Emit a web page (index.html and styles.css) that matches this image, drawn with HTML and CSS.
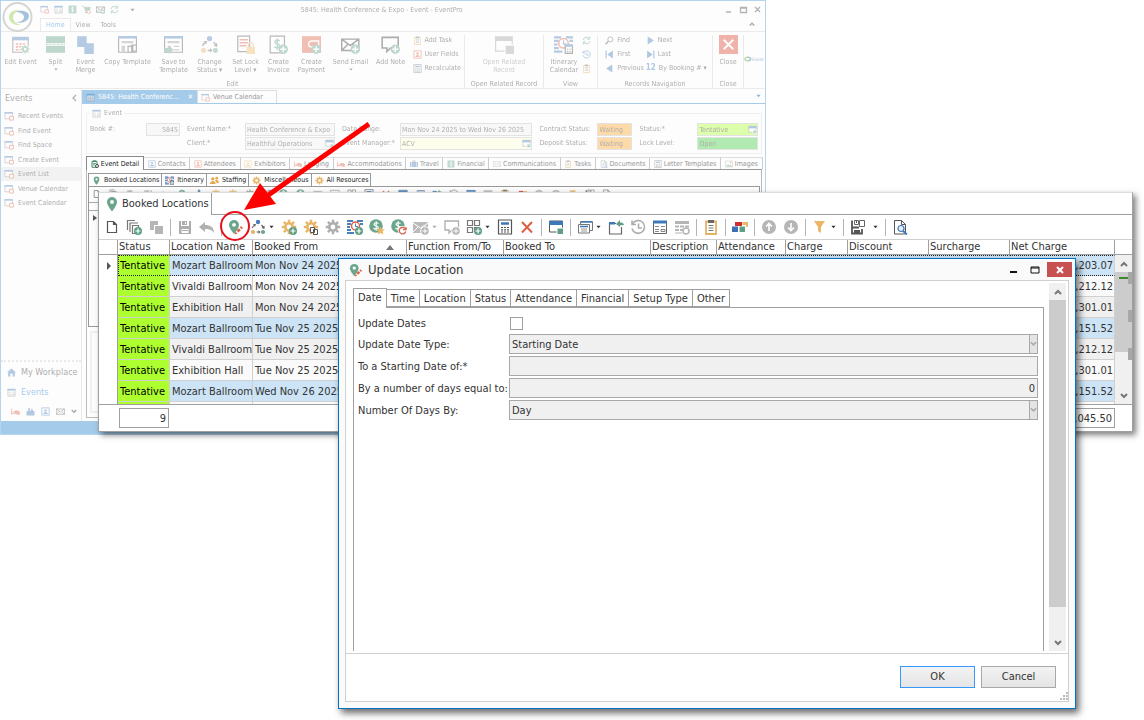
FILE: index.html
```html
<!DOCTYPE html>
<html lang="en">
<head>
    <meta charset="UTF-8">
    <meta name="viewport" content="width=device-width, initial-scale=1.0">
    <title>Update Location</title>
    <link rel="stylesheet" href="styles.css">
</head>
<body>
    <!-- Icons -->
    <svg class="icon-defs" aria-hidden="true">
        <symbol id="plus" viewBox="0 0 16 16"><circle cx="12" cy="12" r="4" fill="#5f9e84"/><path d="M12 9.500v5M9.500 12h5" stroke="#fff" stroke-width="1.200"/></symbol>
        <symbol id="pin" viewBox="0 0 16 16"><path d="M8 1a5 5 0 0 0-5 5c0 3.500 5 9.500 5 9.500s5-6 5-9.500a5 5 0 0 0-5-5z" fill="#6aa58c"/><circle cx="8" cy="6" r="1.900" fill="#fff"/></symbol>
        <symbol id="pinedit" viewBox="0 0 16 16"><path d="M6 1a5 5 0 0 0-5 5c0 3 5 9 5 9s5-6 5-9a5 5 0 0 0-5-5z" fill="#6aa58c"/><circle cx="6" cy="5.800" r="1.900" fill="#fff"/><path d="M7.500 12.500l2 2-2.700 1zM8.500 11.500l2.300-2.300 2 2-2.300 2.300zM11.800 8.200l1.200-1.200 2 2-1.200 1.200z" fill="#dd5f45"/></symbol>
        <symbol id="page" viewBox="0 0 16 16"><path d="M3.500 2.500h6l3 3v8h-9zM9.500 2.500v3h3" fill="#fff" stroke="#555" stroke-width="1.200"/></symbol>
        <symbol id="copyplus" viewBox="0 0 16 16"><path d="M1.500 11V1.500H9M4 13V4h8" fill="none" stroke="#777" stroke-width="1.200"/><path d="M6.500 6.500h6v8h-6z" fill="#fff" stroke="#777" stroke-width="1.200"/><use href="#plus"/></symbol>
        <symbol id="squares" viewBox="0 0 16 16"><path d="M2 2h8v4H6v5H2zM7 7h8v8H7z" fill="#b5b5b5"/></symbol>
        <symbol id="save" viewBox="0 0 16 16"><path d="M2 2h2v5h8V2h2v13H2zM5 2h5v4H5z" fill="#adadad"/><path d="M4.500 10h7v4h-7z" fill="#fff"/><path d="M5 11.500h6" stroke="#adadad"/><path d="M8 3h1v2H8z" fill="#fff"/></symbol>
        <symbol id="undo" viewBox="0 0 16 16"><path d="M0 8l6-5v3c5 0 9 2 9 8-2-3-4-4-9-4v3z" fill="#b0b0b0"/></symbol>
        <symbol id="status" viewBox="0 0 16 16"><circle cx="8" cy="3" r="2.200" fill="#4a7fbd"/><circle cx="3" cy="13" r="2.100" fill="#e6b062"/><circle cx="13" cy="13" r="2.100" fill="#6aa58c"/><path d="M2 9l2-2.500M11.500 6L14 9M6.500 13h3" stroke="#666" stroke-width="1.200" fill="none"/><path d="M3 5l3 0-1 3zM14.500 6.500v3.500l-3-1zM8.500 11l2 2-2 2z" fill="#666"/></symbol>
        <symbol id="cog" viewBox="0 0 16 16"><g fill="none" stroke="currentColor"><circle cx="8" cy="8" r="3.700" stroke-width="2.600"/><path d="M8 .8v3M8 12.200v3M.8 8h3M12.200 8h3M2.900 2.900L5 5M11 11l2.100 2.100M13.100 2.900L11 5M5 11l-2.100 2.100" stroke-width="2.400"/></g></symbol>
        <symbol id="cogplus" viewBox="0 0 16 16"><use href="#cog"/><use href="#plus"/></symbol>
        <symbol id="cogcopy" viewBox="0 0 16 16"><use href="#cog"/><path d="M7.500 8.500h4v5h-4zM10.500 10.500h4v5h-4z" fill="#fff" stroke="#555"/></symbol>
        <symbol id="itin" viewBox="0 0 16 16"><path d="M0 2h6M10 2h6M0 5h4M13 5h3M0 8h3M0 11h4M0 14h7" stroke="#4a7fbd" stroke-width="1.800"/><circle cx="8.500" cy="7" r="4" fill="#fff" stroke="#dd5f45" stroke-width="1.500"/><path d="M8.500 4.500V7.500h2.500" stroke="#4a7fbd" fill="none"/><use href="#plus"/></symbol>
        <symbol id="itincal" viewBox="0 0 16 16"><path d="M0 2h6M10 2h6M0 5h4M13 5h3M0 8h3M0 11h4M0 14h7" stroke="#4a7fbd" stroke-width="1.800"/><circle cx="8" cy="7" r="4" fill="#fff" stroke="#dd5f45" stroke-width="1.300"/><path d="M8 4.500V7.500h2.500" stroke="#4a7fbd" fill="none"/><path d="M9.500 8.500h6v7h-6z" fill="#fff" stroke="#444"/><path d="M9 9h7" stroke="#4a7fbd" stroke-width="2"/><path d="M11 12h3M11 14h3" stroke="#444" stroke-dasharray="1 1"/></symbol>
        <symbol id="dollar" viewBox="0 0 16 16"><circle cx="7" cy="7" r="6.800" fill="#6aa58c"/><path d="M9.500 4.500C8 3.300 5 3.500 5 5.300 5 7.300 9.300 6.500 9.300 8.800 9.300 10.500 6 10.600 4.500 9.300M7.200 2.200v9.600" fill="none" stroke="#fff" stroke-width="1.200"/></symbol>
        <symbol id="dollarstar" viewBox="0 0 16 16"><use href="#dollar"/><path d="M11.500 7.500l1.300 2.700 3 .3-2.200 2 .7 3-2.800-1.600-2.700 1.600.6-3-2.100-2 2.900-.3z" fill="#ebb765"/></symbol>
        <symbol id="dollarsync" viewBox="0 0 16 16"><use href="#dollar"/><circle cx="11.500" cy="11.500" r="4.500" fill="#fff"/><path d="M14.500 10a3.300 3.300 0 1 0 .3 2.500M15 8v2.700h-3" fill="none" stroke="#dd5f45" stroke-width="1.300"/></symbol>
        <symbol id="mail" viewBox="0 0 16 16"><path d="M.6 3.500h14.400v9.500H.6zM.6 3.500l7.200 5.500L15 3.500M.6 13l5-5M15 13l-5-5" fill="none" stroke="currentColor" stroke-width="1.200"/></symbol>
        <symbol id="mailgray" viewBox="0 0 16 16"><path d="M0 3h15v11H0z" fill="#bbb"/><path d="M0 4l7.500 5L15 4M0 13l5-5" fill="none" stroke="#fff"/><circle cx="12" cy="12" r="4.300" fill="#b5b5b5" stroke="#fff"/><path d="M12 9.500v5M9.500 12h5" stroke="#fff"/></symbol>
        <symbol id="mailplus" viewBox="0 0 16 16"><use href="#mail"/><use href="#plus"/></symbol>
        <symbol id="note" viewBox="0 0 16 16"><path d="M1 2h13.500v9H8l-3 3v-3H1z" fill="none" stroke="currentColor" stroke-width="1.300"/></symbol>
        <symbol id="noteplus" viewBox="0 0 16 16"><use href="#note"/><use href="#plus"/></symbol>
        <symbol id="notegray" viewBox="0 0 16 16"><use href="#note"/><circle cx="12" cy="12" r="4.300" fill="#b5b5b5" stroke="#fff"/><path d="M12 9.500v5M9.500 12h5" stroke="#fff"/></symbol>
        <symbol id="tiles" viewBox="0 0 16 16"><path d="M1.500 1.500h5v5h-5zM8.500 1.500h5v5h-5zM1.500 8.500h5v5h-5zM8.500 8.500h4v4h-4z" fill="#fff" stroke="#777" stroke-width="1.200"/><use href="#plus"/></symbol>
        <symbol id="calc" viewBox="0 0 16 16"><path d="M1.500 1h13v14h-13z" fill="#fff" stroke="#555" stroke-width="1.200"/><path d="M4 4.500h8" stroke="#3e78b8" stroke-width="2.500"/><path d="M4 8.500h8M4 10.800h8M4 13h8" stroke="#555" stroke-width="1.200" stroke-dasharray="2 1"/></symbol>
        <symbol id="cross" viewBox="0 0 16 16"><path d="M3 3l10 10.500M13 3L3 13.500" stroke="currentColor" stroke-width="2"/></symbol>
        <symbol id="win" viewBox="0 0 16 16"><path d="M1.500 2h13v11h-13z" fill="#fff" stroke="#555"/><path d="M1 2h14v4H1z" fill="#3e78b8"/><path d="M9 9h6.500v6.500H9z" fill="#5f9e84" stroke="#fff"/></symbol>
        <symbol id="wins" viewBox="0 0 16 16"><path d="M3.500 2.500h12v9h-12z" fill="#fff" stroke="#777"/><path d="M1.500 5.500h11v8.500h-11z" fill="#fff" stroke="#777"/><path d="M4 3h11M3 7.500h8" stroke="#3e78b8" stroke-width="1.400"/><path d="M4 10h6M4 12h6" stroke="#999"/></symbol>
        <symbol id="export" viewBox="0 0 16 16"><path d="M8 4.500H1.500V15h12V8" fill="none" stroke="#666" stroke-width="1.200"/><path d="M1 3h6v2.500H1z" fill="#3e78b8"/><path d="M8 5l4-4v2.500c2 0 3 .3 4 2-1 1-2 .8-4 .8V8z" fill="#5f9e84"/></symbol>
        <symbol id="history" viewBox="0 0 16 16"><path d="M2.500 5A6.400 6.400 0 1 1 2 9.500M2 1.500V5.500h4M8.500 4.500V9h3.500" fill="none" stroke="currentColor" stroke-width="1.600"/></symbol>
        <symbol id="form" viewBox="0 0 16 16"><path d="M1.500 2.500h13v12h-13z" fill="#fff" stroke="#666"/><path d="M1 3h14" stroke="#3e78b8" stroke-width="3"/><path d="M3 7.500h4M3 10.500h4M3 12.500h4M9 7.500h4M9 10.500h4v2H9z" stroke="#888" fill="none"/></symbol>
        <symbol id="tablegray" viewBox="0 0 16 16"><path d="M1 2h14v3H1zM1 6.500h4v2H1zM6 6.500h4v2H6zM11 6.500h4v2h-4zM1 10h4v2H1zM6 10h3v2H6zM1 13.500h7v1H1z" fill="#b5b5b5"/><circle cx="12" cy="12" r="3" fill="none" stroke="#b5b5b5" stroke-width="1.500"/></symbol>
        <symbol id="clip" viewBox="0 0 16 16"><path d="M3 2.500h10v12.500H3z" fill="#fff" stroke="#e6b262" stroke-width="1.800"/><path d="M5 1h6v3H5z" fill="#666"/><path d="M5.500 6.500h5M5.500 9h5M5.500 11.500h5" stroke="#777" stroke-width="1.200"/></symbol>
        <symbol id="carpet" viewBox="0 0 16 16"><path d="M3 3h7v4H3z" fill="#cf2f2f"/><path d="M10.500 3H16v5h-2V6h-3.500z" fill="#ebb765"/><path d="M0 7.500h6V13H0z" fill="#3e6fb0"/><path d="M7.500 7.500H13V13H7.500z" fill="#5f9e84"/></symbol>
        <symbol id="up" viewBox="0 0 16 16"><circle cx="8" cy="8" r="7" fill="#b5b5b5"/><path d="M8 12V5M5 7.500l3-3 3 3" fill="none" stroke="#fff" stroke-width="1.600"/></symbol>
        <symbol id="down" viewBox="0 0 16 16"><circle cx="8" cy="8" r="7" fill="#b5b5b5"/><path d="M8 4v7M5 8.500l3 3 3-3" fill="none" stroke="#fff" stroke-width="1.600"/></symbol>
        <symbol id="funnel" viewBox="0 0 16 16"><path d="M2 2h11L9 8v6l-3-2V8z" fill="#ebb765"/></symbol>
        <symbol id="layout" viewBox="0 0 16 16"><path d="M2 1.500v13h10V10M2 8.500h7" fill="none" stroke="#555" stroke-width="1.800"/><path d="M4.500 1.500h4v4h-4zM9.500 1.500h5v6h-5z" fill="#fff" stroke="#666"/><path d="M6 2h1v2H6zM4 11h6v3H4z" fill="#555"/></symbol>
        <symbol id="preview" viewBox="0 0 16 16"><path d="M2.500 1.500h7l4 4v9.500h-11zM9.500 1.500v4h4" fill="#fff" stroke="#555"/><circle cx="9" cy="9.500" r="3" fill="#e4effa" stroke="#3e78b8" stroke-width="1.200"/><path d="M11 12l4 3.500" stroke="#3e78b8" stroke-width="1.800"/></symbol>
        <symbol id="caret" viewBox="0 0 6 4"><path d="M.5 .5h5l-2.500 3z" fill="currentColor"/></symbol>
        <symbol id="cal" viewBox="0 0 16 16"><path d="M1.500 2.500h13v12h-13z" fill="#fff" stroke="#667"/><path d="M1 3h14" stroke="#4a7fbd" stroke-width="3"/><path d="M4 7.500h8M4 10h8M4 12.500h8" stroke="#dd5f45" stroke-width="1.300" stroke-dasharray="2 1"/></symbol>
        <symbol id="calplus" viewBox="0 0 16 16"><use href="#cal"/><g color="#5f9e84" transform="translate(8 8) scale(.5)"><circle cx="8" cy="8" r="8" fill="#fff"/><use href="#cog" width="16" height="16"/></g></symbol>
        <symbol id="calred" viewBox="0 0 16 16"><path d="M1.500 2.500h12v10h-12z" fill="#fff" stroke="#667"/><path d="M1 3h13" stroke="#4a7fbd" stroke-width="2.500"/><path d="M9 8.500h6v6H9z" fill="#fff" stroke="#dd5f45" stroke-width="1.500"/></symbol>
        <symbol id="cart" viewBox="0 0 16 16"><path d="M0 2h3l3 8h7l2-6H4" fill="#5f9e84" stroke="#5f9e84"/><circle cx="7" cy="13" r="1.500" fill="#555"/><circle cx="12" cy="12" r="3" fill="#fff" stroke="#dd5f45" stroke-width="1.500"/></symbol>
        <symbol id="split" viewBox="0 0 16 16"><path d="M0 1h16v6H0zM0 9h16v6H0z" fill="#5f9e84"/><path d="M0 8h16" stroke="#5f9e84" stroke-dasharray="2 1" stroke-width=".6"/></symbol>
        <symbol id="merge" viewBox="0 0 16 16"><path d="M1 1h8v6h6v9H7v-6H1z" fill="#4a7fbd"/></symbol>
        <symbol id="template" viewBox="0 0 16 16"><path d="M.5 1.500h15v13H.5z" fill="#fff" stroke="#555"/><path d="M0 2h16" stroke="#4a7fbd" stroke-width="2"/><path d="M3 5h10v2H3zM3 9h3v5H3zM8 9h5v1H8zM8 12h5v1H8z" fill="#999"/></symbol>
        <symbol id="tplcopy" viewBox="0 0 16 16"><use href="#template"/><path d="M8.500 9.500h4v5h-4zM11.500 8.500h4v5h-4z" fill="#fff" stroke="#555"/></symbol>
        <symbol id="tplsave" viewBox="0 0 16 16"><use href="#template"/><path d="M0 11h4V9l4 3.500L4 16v-2H0z" fill="#5f9e84"/></symbol>
        <symbol id="lock" viewBox="0 0 16 16"><path d="M1.500 1h10v13h-10z" fill="#fff" stroke="#555"/><path d="M3 4h7M3 6.500h7M3 9h6" stroke="#dd5f45" stroke-width="1.200"/><path d="M9 10h7v6H9z" fill="#ebb765"/><path d="M10.500 10V8.500a2 2 0 0 1 4 0V10" fill="none" stroke="#ebb765"/></symbol>
        <symbol id="invoice" viewBox="0 0 16 16"><path d="M1 1h12v14H1z" fill="#fff" stroke="#555"/><path d="M9 5C7 3.500 5 4.500 5 6c0 2 4 1 4 3.200C9 11 6 11 4.500 10M7 3v9.500" fill="none" stroke="#5f9e84" stroke-width="1.200"/><use href="#plus"/></symbol>
        <symbol id="payment" viewBox="0 0 16 16"><path d="M0 1h16v14H0z" fill="#dd5f45"/><path d="M14 5H8a2.500 2.500 0 0 0 0 5h6z" fill="none" stroke="#fff" stroke-width="1.200"/><use href="#plus"/></symbol>
        <symbol id="related" viewBox="0 0 16 16"><path d="M0 1h15v4H0zM0 5h1v8h7v1H0zM14 5h1v3h-1zM9 9h7v7H9z" fill="#666"/></symbol>
        <symbol id="sync" viewBox="0 0 16 16"><path d="M2 7a6 6 0 0 1 11-2M14 9a6 6 0 0 1-11 2M13.500 1v4.500H9M2.500 15v-4.500H7" fill="none" stroke="#5f9e84" stroke-width="1.700"/></symbol>
        <symbol id="find" viewBox="0 0 16 16"><circle cx="9.500" cy="6" r="4.500" fill="none" stroke="#555" stroke-width="1.500"/><path d="M6 9.500l-5 5" stroke="#555" stroke-width="2.500"/></symbol>
        <symbol id="next" viewBox="0 0 16 16"><path d="M3 1l11 7-11 7z" fill="#3e78b8"/></symbol>
        <symbol id="prev" viewBox="0 0 16 16"><path d="M13 1L2 8l11 7z" fill="#3e78b8"/></symbol>
        <symbol id="first" viewBox="0 0 16 16"><path d="M14 1L4 8l10 7zM1 1h2v14H1z" fill="#3e78b8"/></symbol>
        <symbol id="last" viewBox="0 0 16 16"><path d="M2 1l10 7-10 7zM13 1h2v14h-2z" fill="#3e78b8"/></symbol>
        <symbol id="closebox" viewBox="0 0 16 16"><path d="M0 0h16v16H0z" fill="#d9452b"/><path d="M4 4l8 8M12 4l-8 8" stroke="#fff" stroke-width="1.600"/></symbol>
        <symbol id="person" viewBox="0 0 16 16"><path d="M1.500 1.500h13v13h-13z" fill="#fff" stroke="currentColor" stroke-width="1.500"/><circle cx="8" cy="6" r="2.200" fill="currentColor"/><path d="M4 12.500c0-5 8-5 8 0z" fill="currentColor"/></symbol>
        <symbol id="bed" viewBox="0 0 16 16"><path d="M1 3v11M1 11h14v3M3 8.500h3M7 10V7h5q3 0 3 3z" fill="currentColor" stroke="currentColor" stroke-width="1.500"/></symbol>
        <symbol id="case" viewBox="0 0 16 16"><path d="M0 4h3v10H0zM4 4h8v10H4zM13 4h3v10h-3z" fill="#4a7fbd"/><path d="M5.500 4V2h5v2" fill="none" stroke="#555" stroke-width="1.300"/></symbol>
        <symbol id="finance" viewBox="0 0 16 16"><path d="M1 1h14v14H1z" fill="#6aa58c"/><path d="M10 5C8 3.500 6 4.500 6 6c0 2 4 1 4 3.200C10 11 7 11 5.500 10M8 3v10" fill="none" stroke="#fff" stroke-width="1.300"/></symbol>
        <symbol id="image" viewBox="0 0 16 16"><path d="M1 2h14v12H1z" fill="#fff" stroke="#777"/><path d="M2 13l4-5 3 3 2-2 3 4z" fill="#5f9e84"/><circle cx="11" cy="5" r="1.500" fill="#dd5f45"/></symbol>
        <symbol id="people" viewBox="0 0 16 16"><circle cx="5" cy="5" r="3" fill="#e6a94e"/><path d="M0 14c0-7 10-7 10 0z" fill="#e6a94e"/><circle cx="12" cy="4" r="2.500" fill="#e6a94e"/><path d="M9 8c3-2 7 0 7 4h-5z" fill="#e6a94e"/></symbol>
        <symbol id="detailclip" viewBox="0 0 16 16"><path d="M2 2.500h10v12H2z" fill="#fff" stroke="#3f8467" stroke-width="2"/><path d="M4 1h6v3H4zM4 6h6v1.500H4zM4 9h4v1.500H4z" fill="#3f8467"/><circle cx="12" cy="12" r="3" fill="#fff" stroke="#333" stroke-width="1.800"/></symbol>
        <symbol id="home" viewBox="0 0 16 16"><path d="M0 8l8-7 8 7h-2v7h-4v-5H6v5H2V8z" fill="#4a7fbd"/></symbol>
        <symbol id="factory" viewBox="0 0 16 16"><path d="M1 15V7h3V2h3v5h2V4h3v3h3v8z" fill="#3e78b8"/></symbol>
        <symbol id="chevup" viewBox="0 0 8 6"><path d="M1 5l3-3 3 3" fill="none" stroke="currentColor" stroke-width="2"/></symbol>
        <symbol id="chevdown" viewBox="0 0 8 6"><path d="M1 1l3 3 3-3" fill="none" stroke="currentColor" stroke-width="2"/></symbol>
    </svg>

    <!-- Main application window -->
    <div class="app">
        <div class="app-title faded">
            <svg class="logo" viewBox="0 0 32 32"><circle cx="16.500" cy="16" r="14" fill="#fff" stroke="#999" stroke-width="2"/><path d="M20 10C14 8 8 11 8 16c0 5 5 9 12 8-5-1-8-4-8-8 0-3 3-6 8-6z" fill="#8cc63f"/><path d="M14 11c8-3 14 0 14 4 0 5-7 8-13 6 5 0 8-2 8-5s-4-5-9-5z" fill="#2566a8"/></svg>
            <div class="quick">
                <svg><use href="#calred"/></svg><svg><use href="#form"/></svg><svg><use href="#finance"/></svg><svg><use href="#cart"/></svg><svg><use href="#mailplus"/></svg><svg><use href="#sync"/></svg><svg class="caret"><use href="#caret"/></svg>
            </div>
            <div class="app-name">5845: Health Conference &amp; Expo - Event - EventPro</div>
            <svg class="app-controls" viewBox="0 0 36 10"><path d="M0 7h5M14.500 2.500h6v5h-6zM14 3h7M29 2l5 5M34 2l-5 5" fill="none" stroke="#444" stroke-width="1.300"/></svg>
        </div>
        <nav class="ribbon-tabs faded">
            <a class="active" href="#">Home</a><a href="#">View</a><a href="#">Tools</a>
            <svg class="chev"><use href="#chevup"/></svg>
        </nav>
        <div class="ribbon faded">
            <div class="group">
                <div class="tools edit-tools">
                    <button><svg><use href="#calplus"/></svg>Edit Event</button>
                    <button><svg><use href="#split"/></svg>Split<svg class="caret"><use href="#caret"/></svg></button>
                    <button><svg><use href="#merge"/></svg>Event<br>Merge</button>
                    <button><svg><use href="#tplcopy"/></svg>Copy Template</button>
                    <button><svg><use href="#tplsave"/></svg>Save to<br>Template</button>
                    <button><svg><use href="#status"/></svg>Change<br>Status ▾</button>
                    <button><svg><use href="#lock"/></svg>Set Lock<br>Level ▾</button>
                    <button><svg><use href="#invoice"/></svg>Create<br>Invoice</button>
                    <button><svg><use href="#payment"/></svg>Create<br>Payment</button>
                    <button><svg><use href="#mailplus"/></svg>Send Email<svg class="caret"><use href="#caret"/></svg></button>
                    <button><svg><use href="#noteplus"/></svg>Add Note</button>
                    <div class="small-tools">
                        <button><svg><use href="#clip"/></svg>Add Task</button>
                        <button><svg class="red"><use href="#person"/></svg>User Fields</button>
                        <button><svg><use href="#calc"/></svg>Recalculate</button>
                    </div>
                </div>
                <span>Edit</span>
            </div>
            <div class="group related">
                <div class="tools"><button disabled><svg><use href="#related"/></svg>Open Related<br>Record</button></div>
                <span>Open Related Record</span>
            </div>
            <div class="group view">
                <div class="tools">
                    <button><svg><use href="#itincal"/></svg>Itinerary<br>Calendar</button>
                    <div class="small-tools">
                        <button aria-label="Refresh"><svg><use href="#sync"/></svg></button>
                        <button aria-label="History"><svg class="blue"><use href="#history"/></svg></button>
                        <button aria-label="Tasks"><svg><use href="#clip"/></svg></button>
                    </div>
                </div>
                <span>View</span>
            </div>
            <div class="group nav">
                <div class="tools">
                    <div class="small-tools">
                        <button><svg><use href="#find"/></svg>Find</button>
                        <button><svg><use href="#first"/></svg>First</button>
                        <button><svg><use href="#prev"/></svg>Previous</button>
                    </div>
                    <div class="small-tools">
                        <button><svg><use href="#next"/></svg>Next</button>
                        <button><svg><use href="#last"/></svg>Last</button>
                        <button><b>12</b>By Booking # ▾</button>
                    </div>
                </div>
                <span>Records Navigation</span>
            </div>
            <div class="group close">
                <div class="tools"><button><svg><use href="#closebox"/></svg>Close</button></div>
                <span>Close</span>
            </div>
            <svg class="brand" viewBox="0 0 22 8"><ellipse cx="4" cy="4" rx="3" ry="2" fill="none" stroke="#5f9e34" stroke-width="1.500"/><path d="M4 2c3 0 4 1 4 2S6 6 4 6" fill="none" stroke="#2566a8"/><text x="9" y="6" font-size="5" fill="#2566a8">Event</text></svg>
        </div>

        <div class="app-body">
            <aside class="faded">
                <h2>Events<svg class="back" viewBox="0 0 6 8"><path d="M5 1L2 4l3 3" fill="none" stroke="#444" stroke-width="1.300"/></svg></h2>
                <ul>
                    <li><a href="#"><svg><use href="#calred"/></svg>Recent Events</a></li>
                    <li><a href="#"><svg><use href="#calred"/></svg>Find Event</a></li>
                    <li><a href="#"><svg><use href="#calred"/></svg>Find Space</a></li>
                    <li><a href="#"><svg><use href="#calred"/></svg>Create Event</a></li>
                    <li class="current"><a href="#"><svg><use href="#calred"/></svg>Event List</a></li>
                    <li><a href="#"><svg><use href="#calred"/></svg>Venue Calendar</a></li>
                    <li><a href="#"><svg><use href="#calred"/></svg>Event Calendar</a></li>
                </ul>
                <div class="sections">
                    <a href="#"><svg><use href="#home"/></svg>My Workplace</a>
                    <a class="active" href="#"><svg><use href="#form"/></svg>Events</a>
                    <div class="section-icons"><svg class="red"><use href="#bed"/></svg><svg><use href="#factory"/></svg><svg class="blue"><use href="#person"/></svg><svg><use href="#mail"/></svg><svg class="chev"><use href="#chevdown"/></svg></div>
                </div>
            </aside>
            <div class="doc">
                <nav class="doc-tabs">
                    <a class="active" href="#"><svg class="faded"><use href="#cal"/></svg>5845: Health Conferenc...<span>✕</span></a>
                    <a href="#"><svg class="faded"><use href="#calred"/></svg>Venue Calendar</a>
                    <svg class="caret"><use href="#caret"/></svg>
                </nav>
                <fieldset class="faded">
                    <legend><svg><use href="#form"/></svg>Event</legend>
                    <div class="event-fields">
                        <label for="book">Book #:</label><input id="book" class="num" value="5845">
                        <label for="name">Event Name:*</label><input id="name" value="Health Conference &amp; Expo">
                        <label for="range">Date Range:</label><input id="range" value="Mon Nov 24 2025 to Wed Nov 26 2025">
                        <label for="contract">Contract Status:</label><input id="contract" class="waiting" value="Waiting">
                        <label for="evstatus">Status:*</label><div class="lookup"><input id="evstatus" class="tentative" value="Tentative"><svg><use href="#win"/></svg></div>
                        <i></i><i></i>
                        <label for="client">Client:*</label><div class="lookup"><input id="client" value="Healthful Operations"><svg><use href="#win"/></svg></div>
                        <label for="manager">Event Manager:*</label><div class="lookup"><input id="manager" class="acv" value="ACV"><svg><use href="#win"/></svg></div>
                        <label for="deposit">Deposit Status:</label><input id="deposit" class="waiting" value="Waiting">
                        <label for="lock-level">Lock Level:</label><input id="lock-level" class="open" value="Open">
                    </div>
                </fieldset>
                <nav class="detail-tabs">
                    <a class="active" href="#"><svg><use href="#detailclip"/></svg>Event Detail</a>
                    <a href="#"><svg class="blue"><use href="#person"/></svg>Contacts</a>
                    <a href="#"><svg class="red"><use href="#person"/></svg>Attendees</a>
                    <a href="#"><svg class="orange"><use href="#person"/></svg>Exhibitors</a>
                    <a href="#"><svg class="red"><use href="#bed"/></svg>Lodging</a>
                    <a href="#"><svg class="red"><use href="#bed"/></svg>Accommodations</a>
                    <a href="#"><svg><use href="#case"/></svg>Travel</a>
                    <a href="#"><svg><use href="#finance"/></svg>Financial</a>
                    <a href="#"><svg><use href="#mail"/></svg>Communications</a>
                    <a href="#"><svg><use href="#clip"/></svg>Tasks</a>
                    <a href="#"><svg><use href="#preview"/></svg>Documents</a>
                    <a href="#"><svg><use href="#calc"/></svg>Letter Templates</a>
                    <a href="#"><svg><use href="#image"/></svg>Images</a>
                </nav>
                <div class="detail">
                    <nav class="sub-tabs">
                        <a href="#"><svg><use href="#pin"/></svg>Booked Locations</a>
                        <a href="#"><svg><use href="#itincal"/></svg>Itinerary</a>
                        <a href="#"><svg><use href="#people"/></svg>Staffing</a>
                        <a href="#"><svg class="orange"><use href="#cog"/></svg>Miscellaneous</a>
                        <a href="#"><svg class="orange"><use href="#cog"/></svg>All Resources</a>
                    </nav>
                    <div class="mini-list">
                        <div class="mini-toolbar">
                            <svg><use href="#page"/></svg><svg><use href="#copyplus"/></svg><svg><use href="#squares"/></svg><svg><use href="#save"/></svg><svg><use href="#undo"/></svg><svg><use href="#pin"/></svg><svg><use href="#status"/></svg><svg class="orange"><use href="#cog"/></svg><svg class="orange"><use href="#cog"/></svg><svg><use href="#cog"/></svg><svg><use href="#itin"/></svg><svg><use href="#dollar"/></svg><svg><use href="#dollar"/></svg><svg><use href="#mailgray"/></svg><svg><use href="#note"/></svg><svg><use href="#tiles"/></svg><svg><use href="#calc"/></svg><svg class="red"><use href="#cross"/></svg><svg><use href="#win"/></svg><svg><use href="#wins"/></svg><svg><use href="#export"/></svg><svg><use href="#history"/></svg><svg><use href="#form"/></svg><svg><use href="#tablegray"/></svg><svg><use href="#clip"/></svg><svg><use href="#carpet"/></svg><svg><use href="#up"/></svg><svg><use href="#down"/></svg><svg><use href="#funnel"/></svg><svg><use href="#layout"/></svg><svg><use href="#preview"/></svg>
                        </div>
                        <div class="mini-head"></div>
                        <svg class="marker" viewBox="0 0 4 6"><path d="M0 0l4 3-4 3z" fill="#555"/></svg>
                    </div>
                    <div class="lower-panel faded"></div>
                </div>
            </div>
        </div>
        <div class="status-bar"></div>
    </div>

    <!-- Booked locations list -->
    <section class="locations">
        <nav class="loc-tabs"><a href="#"><svg><use href="#pin"/></svg>Booked Locations</a></nav>
        <div class="toolbar">
            <button aria-label="New"><svg><use href="#page"/></svg></button>
            <button aria-label="New from copy"><svg><use href="#copyplus"/></svg></button>
            <button aria-label="Duplicate"><svg><use href="#squares"/></svg></button>
            <hr>
            <button aria-label="Save"><svg><use href="#save"/></svg></button>
            <button aria-label="Undo"><svg><use href="#undo"/></svg></button>
            <hr>
            <button aria-label="Update location"><svg><use href="#pinedit"/></svg></button>
            <button class="drop" aria-label="Change status"><svg><use href="#status"/></svg><svg class="caret"><use href="#caret"/></svg></button>
            <button class="orange" aria-label="Add resource"><svg><use href="#cogplus"/></svg></button>
            <button class="orange" aria-label="Copy resource"><svg><use href="#cogcopy"/></svg></button>
            <button class="gray" aria-label="Settings"><svg><use href="#cog"/></svg></button>
            <button aria-label="Add itinerary"><svg><use href="#itin"/></svg></button>
            <button aria-label="Price"><svg><use href="#dollarstar"/></svg></button>
            <button aria-label="Recalculate price"><svg><use href="#dollarsync"/></svg></button>
            <button class="drop gray" aria-label="Send email"><svg><use href="#mailgray"/></svg><svg class="caret"><use href="#caret"/></svg></button>
            <button class="gray" aria-label="Add note"><svg><use href="#notegray"/></svg></button>
            <button class="drop" aria-label="Add layout"><svg><use href="#tiles"/></svg><svg class="caret"><use href="#caret"/></svg></button>
            <button aria-label="Calculator"><svg><use href="#calc"/></svg></button>
            <button class="red" aria-label="Delete"><svg><use href="#cross"/></svg></button>
            <hr>
            <button aria-label="Open record"><svg><use href="#win"/></svg></button>
            <hr>
            <button class="drop" aria-label="Views"><svg><use href="#wins"/></svg><svg class="caret"><use href="#caret"/></svg></button>
            <button aria-label="Export"><svg><use href="#export"/></svg></button>
            <button class="gray" aria-label="History"><svg><use href="#history"/></svg></button>
            <button aria-label="Form view"><svg><use href="#form"/></svg></button>
            <button aria-label="Table view"><svg><use href="#tablegray"/></svg></button>
            <hr>
            <button aria-label="Tasks"><svg><use href="#clip"/></svg></button>
            <hr>
            <button aria-label="Colors"><svg><use href="#carpet"/></svg></button>
            <hr>
            <button aria-label="Move up"><svg><use href="#up"/></svg></button>
            <button aria-label="Move down"><svg><use href="#down"/></svg></button>
            <hr>
            <button class="drop" aria-label="Filter"><svg><use href="#funnel"/></svg><svg class="caret"><use href="#caret"/></svg></button>
            <hr>
            <button class="drop wide" aria-label="Layout"><svg><use href="#layout"/></svg><svg class="caret"><use href="#caret"/></svg></button>
            <hr>
            <button aria-label="Preview"><svg><use href="#preview"/></svg></button>
        </div>
        <div class="grid">
            <table>
                <colgroup>
                    <col class="c-mark"><col class="c-status"><col class="c-name"><col class="c-from"><col class="c-func"><col class="c-to"><col class="c-desc"><col class="c-att"><col class="c-charge"><col class="c-disc"><col class="c-sur"><col>
                </colgroup>
                <thead>
                    <tr><th></th><th>Status</th><th>Location Name</th><th class="sorted">Booked From<svg viewBox="0 0 8 5"><path d="M0 5l4-5 4 5z" fill="#777"/></svg></th><th>Function From/To</th><th>Booked To</th><th>Description</th><th>Attendance</th><th>Charge</th><th>Discount</th><th>Surcharge</th><th>Net Charge</th></tr>
                </thead>
                <tbody>
                    <tr class="blue-row selected"><td class="mark"><svg viewBox="0 0 4 8"><path d="M0 0l4 4-4 4z" fill="#555"/></svg></td><td>Tentative</td><td>Mozart Ballroom</td><td>Mon Nov 24 2025</td><td colspan="7"></td><td>,203.07</td></tr>
                    <tr><td class="mark"></td><td>Tentative</td><td>Vivaldi Ballroom</td><td>Mon Nov 24 2025</td><td colspan="7"></td><td>,212.12</td></tr>
                    <tr class="gray-row"><td class="mark"></td><td>Tentative</td><td>Exhibition Hall</td><td>Mon Nov 24 2025</td><td colspan="7"></td><td>,301.01</td></tr>
                    <tr class="blue-row"><td class="mark"></td><td>Tentative</td><td>Mozart Ballroom</td><td>Tue Nov 25 2025</td><td colspan="7"></td><td>,151.52</td></tr>
                    <tr class="gray-row"><td class="mark"></td><td>Tentative</td><td>Vivaldi Ballroom</td><td>Tue Nov 25 2025</td><td colspan="7"></td><td>,212.12</td></tr>
                    <tr><td class="mark"></td><td>Tentative</td><td>Exhibition Hall</td><td>Tue Nov 25 2025</td><td colspan="7"></td><td>,301.01</td></tr>
                    <tr class="blue-row"><td class="mark"></td><td>Tentative</td><td>Mozart Ballroom</td><td>Wed Nov 26 2025</td><td colspan="7"></td><td>,151.52</td></tr>
                    <tr><td class="mark"></td><td></td><td></td><td></td><td colspan="7"></td><td></td></tr>
                </tbody>
            </table>
            <div class="grid-scroll">
                <div class="scroll-head"></div>
                <svg class="chev"><use href="#chevup"/></svg>
                <div class="track"><div class="thumb"></div><i></i><i></i><i></i></div>
                <svg class="chev"><use href="#chevdown"/></svg>
            </div>
        </div>
        <div class="totals"><output>9</output><output>,045.50</output></div>
    </section>

    <!-- Update Location dialog -->
    <section class="dialog" role="dialog" aria-labelledby="dialog-title">
        <header>
            <svg><use href="#pinedit"/></svg>
            <h1 id="dialog-title">Update Location</h1>
            <button aria-label="Minimize"><svg viewBox="0 0 10 8"><path d="M1 6h7" stroke="#111" stroke-width="2"/></svg></button>
            <button aria-label="Maximize"><svg viewBox="0 0 10 8"><path d="M1 1h8v6H1zM1 2h8" fill="none" stroke="#111"/></svg></button>
            <button class="close-btn" aria-label="Close"><svg viewBox="0 0 10 8"><path d="M2 1l6 6M8 1L2 7" stroke="#fff" stroke-width="2"/></svg></button>
        </header>
        <div class="dialog-frame">
            <div class="dialog-body">
                <div class="dialog-content">
                    <nav class="dialog-tabs">
                        <a class="active" href="#">Date</a><a href="#">Time</a><a href="#">Location</a><a href="#">Status</a><a href="#">Attendance</a><a href="#">Financial</a><a href="#">Setup Type</a><a href="#">Other</a>
                    </nav>
                    <form class="panel">
                        <label for="update">Update Dates</label>
                        <input type="checkbox" id="update">
                        <label for="type">Update Date Type:</label>
                        <div class="select"><select id="type"><option>Starting Date</option></select><svg><use href="#chevdown"/></svg></div>
                        <label for="start">To a Starting Date of:*</label>
                        <input type="text" id="start">
                        <label for="days">By a number of days equal to:</label>
                        <input type="text" class="num" id="days" value="0">
                        <label for="by">Number Of Days By:</label>
                        <div class="select"><select id="by"><option>Day</option></select><svg><use href="#chevdown"/></svg></div>
                    </form>
                </div>
                <div class="dialog-scroll">
                    <svg class="chev"><use href="#chevup"/></svg>
                    <div class="thumb"></div>
                    <svg class="chev last"><use href="#chevdown"/></svg>
                </div>
            </div>
            <footer>
                <button class="ok">OK</button>
                <button>Cancel</button>
                <svg class="grip" viewBox="0 0 9 9"><path d="M7 0h2v2H7zM4 3h2v2H4zM7 3h2v2H7zM1 6h2v2H1zM4 6h2v2H4zM7 6h2v2H7z" fill="#bbb"/></svg>
            </footer>
        </div>
    </section>

    <!-- Callout -->
    <svg class="callout" viewBox="0 0 170 130">
        <circle cx="35" cy="106" r="14" fill="none" stroke="#e8101c" stroke-width="2"/>
        <path d="M169 4L67 76" stroke="#f00" stroke-width="5"/>
        <path d="M44 90L60 63L76 84z" fill="#f00"/>
    </svg>
</body>
</html>
```
FILE: styles.css
```css
* {
    box-sizing: border-box;
}

body {
    margin: 0;
    min-height: 100vh;
    position: relative;
    overflow: hidden;
    background: #fff;
    color: #333;
    font: 11px/14px "DejaVu Sans Condensed", "DejaVu Sans", sans-serif;
}

a {
    color: inherit;
    text-decoration: none;
}

button, input, select {
    font: inherit;
    color: inherit;
}

button {
    border: 0;
    padding: 0;
    background: none;
}

svg {
    display: block;
    flex: none;
}

.icon-defs {
    position: absolute;
    width: 0;
    height: 0;
}

.faded { opacity: 0.4; }
.red { color: #dd5f45; }
.blue { color: #4a7fbd; }
.orange { color: #e8b567; }
.gray { color: #adadad; }

.caret {
    width: 5px;
    height: 4px;
}

.chev {
    width: 8px;
    height: 6px;
}

/* Main application window */
.app {
    position: absolute;
    top: 0;
    left: 0;
    width: 67%;
    border: 1px solid #b4d4ef;
    background: #fdfdfd;
    font-size: 7px;
    line-height: 8px;
}

.app a, .app button {
    white-space: nowrap;
}

.app-title {
    display: flex;
    align-items: center;
    height: 17px;
}

.logo {
    width: 32px;
    height: 32px;
    align-self: flex-start;
    z-index: 1;
}

.quick {
    display: flex;
    align-items: center;
    gap: 5px;
    padding-left: 7px;
}

.quick svg {
    width: 9px;
    height: 9px;
}

.quick .caret {
    width: 5px;
    height: 4px;
    margin-left: 6px;
}

.app-name {
    flex: 1;
    text-align: center;
    padding-right: 98px;
}

.app-controls {
    width: 36px;
    height: 10px;
    margin-right: 3px;
}

.ribbon-tabs {
    display: flex;
    align-items: flex-end;
    height: 14px;
    padding-left: 39px;
    border-bottom: 1px solid #ccc;
}

.ribbon-tabs a {
    padding: 2px 5px;
}

.ribbon-tabs a.active {
    color: #1b7fd0;
    border: 1px solid #ccc;
    border-bottom: 0;
    background: #fff;
}

.ribbon-tabs .chev {
    margin: 0 10px 4px auto;
    width: 6px;
}

.ribbon {
    display: flex;
    height: 57px;
    padding-top: 3px;
    border-bottom: 1px solid #ccc;
}

.group {
    display: flex;
    flex-direction: column;
    justify-content: space-between;
    border-right: 1px solid #ccc;
    text-align: center;
    width: 464px;
    padding: 0 2px;
    white-space: nowrap;
}

.group.related { width: 79px; }
.group.view { width: 54px; }
.group.nav { width: 115px; }
.group.close { width: 31px; }

.tools {
    display: flex;
    justify-content: center;
}

.edit-tools {
    display: grid;
    grid-template-columns: 36px 34px 26px 58px 34px 38px 34px 32px 34px 44px 36px 54px;
}

.tools > button {
    display: flex;
    flex-direction: column;
    align-items: center;
    min-width: 0;
}

.tools > button > svg {
    width: 19px;
    height: 19px;
    margin-bottom: 4px;
}

.tools > button > .caret {
    width: 4px;
    height: 3px;
    margin-top: 2px;
}

.related .tools {
    opacity: 0.6;
}

.small-tools {
    display: flex;
    flex-direction: column;
    gap: 4px;
}

.small-tools button {
    display: flex;
    align-items: center;
    gap: 3px;
    height: 10px;
    padding-left: 4px;
}

.small-tools svg {
    width: 9px;
    height: 9px;
}

.small-tools b {
    color: #3e78b8;
    font-size: 8px;
}

.nav .small-tools button {
    padding-left: 2px;
}

.brand {
    width: 20px;
    height: 8px;
    margin-top: 20px;
    overflow: hidden;
}

.app-body {
    display: flex;
    height: 332px;
}

aside {
    display: flex;
    flex-direction: column;
    width: 81px;
    border-right: 1px solid #ccc;
}

aside h2 {
    display: flex;
    justify-content: space-between;
    margin: 0;
    padding: 3px 4px 0;
    font-size: 9px;
    line-height: 12px;
    font-weight: normal;
}

.back {
    width: 6px;
    height: 8px;
    margin-top: 2px;
}

aside ul {
    display: flex;
    flex-direction: column;
    justify-content: space-between;
    height: 101px;
    margin: 5px 0 0;
    padding: 0;
    list-style: none;
}

aside li a {
    display: flex;
    align-items: center;
    gap: 4px;
    height: 14px;
    padding-left: 3px;
}

aside li svg {
    width: 10px;
    height: 10px;
}

.current {
    background: #e4e4e4;
}

.sections {
    margin-top: auto;
    border-top: 2px dotted #ccc;
    font-size: 9px;
}

.sections a {
    display: flex;
    align-items: center;
    gap: 5px;
    height: 20px;
    padding-left: 6px;
}

.sections .active {
    color: #1b7fd0;
}

.sections svg {
    width: 9px;
    height: 9px;
}

.section-icons {
    display: flex;
    justify-content: space-between;
    align-items: center;
    height: 19px;
    padding: 0 4px 0 10px;
}

.section-icons .chev {
    width: 6px;
}

.doc {
    flex: 1;
    min-width: 0;
    display: flex;
    flex-direction: column;
    color: #999;
}

.doc-tabs {
    display: flex;
    margin-top: 1px;
    border-bottom: 1px solid #a5cbea;
}

.doc-tabs a {
    display: flex;
    align-items: center;
    gap: 3px;
    height: 13px;
    width: 80px;
    padding: 0 3px;
    border: 1px solid #ddd;
    border-bottom: 0;
}

.doc-tabs a.active {
    width: 115px;
    background: #a5cbea;
    border-color: #a5cbea;
    color: #fff;
}

.doc-tabs a span {
    margin-left: auto;
}

.doc-tabs a svg {
    width: 9px;
    height: 9px;
}

.doc-tabs .caret {
    margin: 4px 4px 0 auto;
    color: #7db5e5;
}

.doc fieldset {
    margin: 5px 3px 0 4px;
    padding: 5px 3px 3px;
    border: 1px solid #ddd;
    color: #333;
    min-width: 0;
}

.doc legend {
    display: flex;
    gap: 3px;
    padding: 0 2px;
}

.doc legend svg {
    width: 9px;
    height: 9px;
}

.event-fields {
    display: grid;
    grid-template-columns: 56px 34px 65px 90px 65px 1fr 65px 35px 65px 61px;
    row-gap: 1px;
    align-items: center;
    white-space: nowrap;
}

.event-fields input {
    width: 100%;
    height: 13px;
    padding: 0 1px;
    border: 1px solid #bbb;
    background: #f0f0f0;
}

.event-fields label {
    height: 13px;
    line-height: 13px;
    padding-left: 7px;
}

.event-fields label[for="book"] {
    padding-left: 0;
}

.event-fields .num { text-align: right; }
.event-fields .waiting { background: #ffa62b; }
.event-fields .tentative { background: #adff2f; }
.event-fields .open { background: #3cce3c; }
.event-fields .acv { background: #ffffd5; }

.lookup {
    position: relative;
}

.lookup svg {
    position: absolute;
    top: 2px;
    right: 1px;
    width: 9px;
    height: 9px;
}

.detail-tabs {
    display: flex;
    align-items: flex-end;
    margin: 2px 3px 0 4px;
    height: 14px;
    border-bottom: 1px solid #999;
}

.detail-tabs a {
    display: flex;
    flex: auto;
    align-items: center;
    justify-content: center;
    gap: 2px;
    height: 12px;
    border-right: 1px solid #ccc;
    border-top: 1px solid #ddd;
}

.detail-tabs svg {
    width: 8px;
    height: 8px;
    opacity: 0.4;
}

.detail-tabs a.active {
    height: 14px;
    margin-bottom: -1px;
    border: 1px solid #888;
    border-bottom: 0;
    background: #fff;
    color: #222;
}

.detail-tabs a.active svg {
    opacity: 1;
}

.detail {
    flex: 1;
    display: flex;
    flex-direction: column;
    margin: 0 3px 3px 4px;
    padding: 3px 1px 0;
    border: 1px solid #bbb;
    border-top: 0;
}

.sub-tabs {
    display: flex;
}

.sub-tabs a {
    display: flex;
    align-items: center;
    gap: 3px;
    height: 13px;
    padding: 0 2px 0 3px;
    border: 1px solid #999;
    border-left: 0;
    border-bottom: 0;
    background: #fff;
    color: #222;
}

.sub-tabs a:first-child {
    border-left: 1px solid #999;
}

.sub-tabs svg {
    width: 9px;
    height: 9px;
}

.mini-list {
    height: 141px;
    border: 1px solid #999;
}

.mini-toolbar {
    display: flex;
    gap: 7px;
    padding: 2px 3px;
    opacity: 0.8;
}

.mini-toolbar svg {
    width: 10px;
    height: 10px;
}

.mini-head {
    height: 9px;
    margin-top: 1px;
    border: 1px solid #aaa;
    border-left: 0;
    border-right: 0;
}

.marker {
    width: 4px;
    height: 6px;
    margin: 4px;
}

.lower-panel {
    flex: 1;
    margin: 4px 2px;
    border: 2px solid #ddd;
}

.status-bar {
    height: 13px;
    background: #a5cbea;
}

/* Booked locations list */
.locations {
    position: absolute;
    top: 192px;
    left: 98px;
    right: 11px;
    border: 1px solid #a0a0a0;
    border-top-color: #ddd;
    background: #fff;
    box-shadow: 3px 3px 6px rgba(0, 0, 0, 0.5);
}

.loc-tabs {
    display: flex;
    border-bottom: 1px solid #a0a0a0;
}

.loc-tabs a {
    display: flex;
    align-items: center;
    gap: 2px;
    height: 22px;
    margin-bottom: -1px;
    padding: 0 2px 0 5px;
    border-right: 1px solid #a0a0a0;
    background: #fff;
}

.loc-tabs svg {
    width: 16px;
    height: 16px;
}

.toolbar {
    display: flex;
    align-items: center;
    height: 24px;
    padding-left: 2px;
}

.toolbar button {
    display: flex;
    align-items: center;
    justify-content: center;
    width: 22px;
    height: 22px;
}

.toolbar button svg {
    width: 16px;
    height: 16px;
}

.toolbar .drop {
    width: 31px;
    justify-content: flex-start;
    gap: 3px;
    padding-left: 3px;
}

.toolbar .wide {
    width: 35px;
    gap: 7px;
}

.toolbar button .caret {
    width: 5px;
    height: 4px;
}

.toolbar hr {
    width: 1px;
    height: 17px;
    margin: 0 3px;
    border: 0;
    background: #b5b5b5;
}

.grid {
    display: flex;
    height: 166px;
    overflow: hidden;
    border-top: 1px solid #d0d0d0;
    border-bottom: 1px solid #a0a0a0;
}

table {
    flex: 1;
    width: 100%;
    height: 183px;
    table-layout: fixed;
    border-collapse: separate;
    border-spacing: 0;
}

.c-mark { width: 19px; }
.c-status { width: 52px; }
.c-name { width: 83px; }
.c-from { width: 154px; }
.c-func { width: 97px; }
.c-to { width: 147px; }
.c-desc { width: 66px; }
.c-att { width: 69px; }
.c-charge { width: 62px; }
.c-disc { width: 81px; }
.c-sur { width: 81px; }

th {
    height: 15px;
    padding: 0 1px;
    border-right: 1px solid #a0a0a0;
    border-bottom: 1px solid #a0a0a0;
    font-weight: normal;
    text-align: left;
    white-space: nowrap;
    line-height: 14px;
}

.sorted svg {
    float: right;
    width: 8px;
    height: 5px;
    margin: 5px 11px 0 0;
}

td {
    height: 21px;
    padding: 1px 2px 0;
    border-right: 1px solid #d0d0d0;
    border-bottom: 1px solid #d0d0d0;
    background: #fafafa;
    white-space: nowrap;
    line-height: 19px;
}

td:nth-child(2) {
    background: #adff2f;
    color: #000;
}

td:last-child {
    text-align: right;
    padding-right: 1px;
}

.blue-row td:nth-child(n+3) { background: #cce4f6; }
.gray-row td:nth-child(n+3) { background: #f0f0f0; }

td.mark {
    background: #fff;
    border-right-color: #a0a0a0;
    border-bottom: 0;
}

.mark svg {
    width: 4px;
    height: 8px;
    margin-left: 6px;
}

.selected td:not(.mark) {
    padding-top: 0;
    border-top: 1px dotted #222;
    border-bottom: 1px dotted #222;
}

.selected td:nth-child(2) {
    border-left: 1px dotted #222;
    padding-left: 1px;
}

.grid-scroll {
    display: flex;
    flex-direction: column;
    align-items: center;
    width: 17px;
    background: #f0f0f0;
    color: #777;
}

.scroll-head {
    width: 100%;
    height: 15px;
    border-bottom: 1px solid #a0a0a0;
    background: #fff;
}

.grid-scroll .chev {
    margin: 6px 0 5px;
}

.track {
    position: relative;
    flex: 1;
    width: 100%;
}

.track .thumb {
    height: 80px;
    padding-top: 5px;
    background: #ccc;
}

.track .thumb::before {
    content: "";
    display: block;
    width: 10px;
    height: 2px;
    margin-left: 4px;
    background: #3d8a2c;
}

.track i {
    position: absolute;
    top: 0;
    right: 0;
    width: 4px;
    height: 12px;
    background: #a8a8a8;
}

.track i:nth-of-type(2) { top: 38px; }
.track i:nth-of-type(3) { top: 76px; }

.totals {
    display: flex;
    justify-content: space-between;
    padding: 3px 17px 3px 20px;
}

.totals output {
    width: 50px;
    height: 20px;
    padding: 0 2px;
    border: 1px solid #a0a0a0;
    line-height: 19px;
    text-align: right;
}

/* Update Location dialog */
.dialog {
    position: absolute;
    top: 258px;
    left: 338px;
    right: 68px;
    padding: 0 6px 6px;
    border: 1px solid #0072c6;
    background: #fafafa;
    box-shadow: 3px 4px 7px rgba(0, 0, 0, 0.6);
}

.dialog header {
    display: flex;
    align-items: center;
    height: 21px;
    margin-right: -3px;
}

.dialog header > svg {
    width: 14px;
    height: 14px;
    margin: 0 5px 0 4px;
}

.dialog h1 {
    flex: 1;
    margin: 0;
    font-size: 13px;
    line-height: 20px;
    font-weight: normal;
}

.dialog header button {
    display: flex;
    align-items: center;
    justify-content: center;
    width: 21px;
    height: 15px;
}

.dialog header button svg {
    width: 10px;
    height: 8px;
}

.dialog header .close-btn {
    width: 25px;
    margin-left: 2px;
    background: #c75050;
}

.dialog-frame {
    border: 1px solid #d0d0d0;
    background: #fff;
}

.dialog-body {
    display: flex;
    height: 373px;
    padding: 2px 2px 2px 7px;
    border-bottom: 1px solid #d0d0d0;
}

.dialog-content {
    flex: 1;
    display: flex;
    flex-direction: column;
    padding: 5px 5px 0 0;
}

.dialog-tabs {
    display: flex;
    align-items: flex-end;
}

.dialog-tabs a {
    height: 18px;
    padding: 0 4px;
    border: 1px solid #a0a0a0;
    border-left: 0;
    line-height: 18px;
}

.dialog-tabs a.active {
    position: relative;
    height: 20px;
    margin-bottom: -1px;
    border-left: 1px solid #a0a0a0;
    border-bottom: 0;
    background: #fff;
}

.panel {
    flex: 1;
    display: grid;
    grid-template-columns: 151px 1fr;
    grid-template-rows: 17px repeat(4, 20px);
    row-gap: 2px;
    align-items: center;
    padding: 7px 5px 0 4px;
    border: 1px solid #a0a0a0;
    border-bottom: 0;
}

.panel label {
    white-space: nowrap;
    line-height: 15px;
}

.panel input[type="checkbox"] {
    appearance: none;
    width: 13px;
    height: 13px;
    margin: 0 1px;
    border: 1px solid #a0a0a0;
    background: #fff;
}

.panel input[type="text"], .panel select {
    appearance: none;
    width: 100%;
    height: 20px;
    padding: 1px 2px 0;
    border: 1px solid #a8a8a8;
    border-radius: 0;
    background: #f0f0f0;
}

.panel .num {
    text-align: right;
}

.select {
    position: relative;
}

.select svg {
    position: absolute;
    top: 0;
    right: 0;
    width: 9px;
    height: 20px;
    border: 1px solid #a8a8a8;
    background: #e4e4e4;
    color: #aaa;
}

.dialog-scroll {
    display: flex;
    flex-direction: column;
    align-items: center;
    width: 17px;
    background: #f0f0f0;
    color: #777;
}

.dialog-scroll .chev {
    margin: 6px 0 5px;
}

.dialog-scroll .thumb {
    width: 100%;
    height: 307px;
    background: #ccc;
}

.dialog-scroll .last {
    margin-top: auto;
}

.dialog footer {
    position: relative;
    display: flex;
    justify-content: flex-end;
    gap: 6px;
    padding: 12px 12px 13px;
}

.dialog footer button {
    width: 75px;
    height: 22px;
    border: 1px solid #a8a8a8;
    background: linear-gradient(#f3f3f3, #e4e4e4);
}

.dialog footer .ok {
    border-color: #3399ff;
}

.grip {
    position: absolute;
    right: 0;
    bottom: 0;
    width: 9px;
    height: 9px;
}

/* Callout */
.callout {
    position: absolute;
    top: 120px;
    left: 200px;
    width: 170px;
    height: 130px;
    pointer-events: none;
}
```
